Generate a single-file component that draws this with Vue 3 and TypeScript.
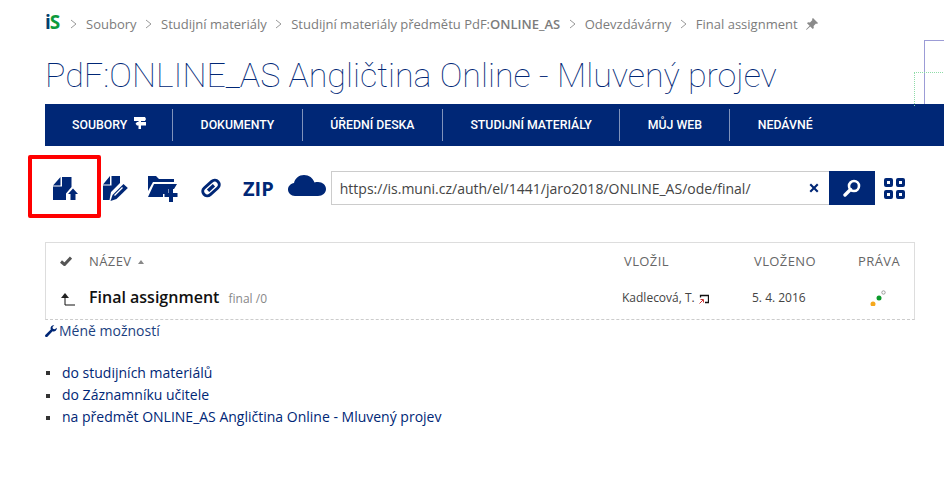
<script setup lang="ts">
const crumbs = ['Soubory', 'Studijní materiály']
const navItems = ['DOKUMENTY', 'ÚŘEDNÍ DESKA', 'STUDIJNÍ MATERIÁLY', 'MŮJ WEB', 'NEDÁVNÉ']
const links = ['do studijních materiálů', 'do Záznamníku učitele', 'na předmět ONLINE_AS Angličtina Online - Mluvený projev']
</script>

<template>
  <div class="page">
    <div class="deco"><div class="deco-dots"></div></div>
    <div class="crumbs">
      <span class="logo"><span class="logo-i">i</span><span class="logo-s">S</span></span>
      <template v-for="c in crumbs" :key="c">
        <svg class="sep" viewBox="0 0 7 10"><path d="M1 1l5 4-5 4" fill="none" stroke="#999" stroke-width="1" /></svg>
        <span>{{ c }}</span>
      </template>
      <svg class="sep" viewBox="0 0 7 10"><path d="M1 1l5 4-5 4" fill="none" stroke="#999" stroke-width="1" /></svg>
      <span>Studijní materiály předmětu PdF:<b>ONLINE_AS</b></span>
      <svg class="sep" viewBox="0 0 7 10"><path d="M1 1l5 4-5 4" fill="none" stroke="#999" stroke-width="1" /></svg>
      <span>Odevzdávárny</span>
      <svg class="sep" viewBox="0 0 7 10"><path d="M1 1l5 4-5 4" fill="none" stroke="#999" stroke-width="1" /></svg>
      <span>Final assignment</span>
      <svg class="pin" viewBox="0 0 12 12"><path d="M7 0l5 5-1 1-1-.4-2.400 2.400.2 2-1 1-2.600-2.600L1 11.600 0 12l.4-1L3.600 7.800 1 5.200l1-1 2 .2L6.400 2 6 1z" fill="#8a8a8a" /></svg>
    </div>

    <h1 class="title">PdF:ONLINE_AS Angličtina Online - Mluvený projev</h1>

    <nav class="nav">
      <a class="nav-item first">SOUBORY
        <svg class="nav-icon" viewBox="0 0 12 12"><path d="M0 0H11L12 2 11 4H7V5H12V8.500H7V12H4.500V8.500H3L1.500 6.700 3 5H4.500V4H0z" fill="#fff" /></svg>
      </a>
      <a v-for="n in navItems" :key="n" class="nav-item">{{ n }}</a>
    </nav>

    <div class="toolbar">
      <div class="redbox"></div>
      <svg class="ic ic-up" viewBox="0 0 25 23"><path d="M0 8.500L7.500 0V8.500zM9 0H18.500V10L13 16.500V23H0V9.500H9zM20 11.500L25 17H22.500V23H17.500V17H15z" fill="#002776" /></svg>
      <svg class="ic ic-ed" viewBox="0 0 25 25"><path d="M0 8.500L7 0V8.500zM8.500 0H17V7L8 16 6.500 24H0V9.500H8.500z" fill="#002776" /><path d="M20.500 8L24.800 12 13.500 23 7.500 25 9.500 19z" fill="#002776" /><path d="M11.500 19.500l8-8" stroke="#fff" stroke-width="1.300" fill="none" /></svg>
      <svg class="ic ic-fo" viewBox="0 0 30 26"><path d="M0 0H8L11 3H26V6H5L0 15zM6 8H29L26 13H20.500V18H15V21H0z" fill="#002776" /><path d="M21 12.500H25V17H29.500V21H25V26H21V21H16.500V17H21z" fill="#002776" /></svg>
      <svg class="ic ic-li" viewBox="0 0 22 22"><g transform="rotate(-42 11 11)" fill="none" stroke="#002776"><rect x="1.500" y="6.500" width="19" height="9" rx="4.500" stroke-width="3" /><path d="M7 11H15" stroke-width="3.400" /></g></svg>
      <span class="zip">ZIP</span>
      <svg class="ic ic-cl" viewBox="0 0 38 21"><path d="M7 21C3 21 0 18 0 14.500 0 11 3 8.500 6 8 7 3.500 11 0 16 0 21 0 25 3 26.500 7.500 27.500 7 29 7 30 7 34.500 7 38 10 38 14 38 18 34.500 21 30 21z" fill="#002776" /></svg>
      <div class="url">
        <span class="url-text">https://is.muni.cz/auth/el/1441/jaro2018/ONLINE_AS/ode/final/</span>
        <svg class="x" viewBox="0 0 10 10"><path d="M2 .5L5 3.500 8 .5 9.500 2 6.500 5 9.500 8 8 9.500 5 6.500 2 9.500 .5 8 3.500 5 .5 2z" fill="#002776" /></svg>
      </div>
      <div class="search">
        <svg viewBox="0 0 18 18"><circle cx="11" cy="7" r="5" fill="none" stroke="#fff" stroke-width="2.600" /><path d="M7.500 10.500L2 16" stroke="#fff" stroke-width="3.400" stroke-linecap="round" /></svg>
      </div>
      <svg class="grid-ic" viewBox="0 0 21 21"><g fill="none" stroke="#002776" stroke-width="3"><rect x="1.500" y="1.500" width="6" height="6" rx=".5" /><rect x="13.500" y="1.500" width="6" height="6" rx=".5" /><rect x="1.500" y="13.500" width="6" height="6" rx=".5" /><rect x="13.500" y="13.500" width="6" height="6" rx=".5" /></g></svg>
    </div>

    <div class="table">
      <div class="row head">
        <svg class="check" viewBox="0 0 12 10"><path d="M1 5.500l3.500 3L11 1.500" fill="none" stroke="#555" stroke-width="3" /></svg>
        <span>NÁZEV <i class="tri"></i></span>
        <span>VLOŽIL</span>
        <span>VLOŽENO</span>
        <span>PRÁVA</span>
      </div>
      <div class="row body">
        <svg class="up" viewBox="0 0 14 14"><path d="M0 6l4-5 4 5z" fill="#222" /><path d="M4 5v8h10" fill="none" stroke="#111" stroke-width="1" /></svg>
        <span class="name"><b>Final assignment</b> <small>final /0</small></span>
        <span class="who">Kadlecová, T.
          <svg class="mail" viewBox="0 0 10 10"><path d="M1.500 3.500V1.500h8v7H6" fill="none" stroke="#111" stroke-width="1.300" /><path d="M.5 9.500l3.500-3.500M1.500 5.500h3v3" fill="none" stroke="#c33" stroke-width="1" /></svg>
        </span>
        <span class="when">5. 4. 2016</span>
        <svg class="rights" viewBox="0 0 18 16"><circle cx="3" cy="14" r="2.500" fill="#f5a81c" /><circle cx="9" cy="8" r="2.500" fill="#0a9a2a" /><circle cx="13.500" cy="2.500" r="1.700" fill="none" stroke="#888" stroke-width=".8" /></svg>
      </div>
    </div>

    <a class="more">
      <svg viewBox="0 0 12 12"><path d="M11.800 2.800A3.200 3.200 0 0 1 7.600 6.300L2.400 11.700a1.200 1.200 0 0 1-1.900-1.900l5.300-5.300A3.200 3.200 0 0 1 9.300.2L7.500 2l.4 1.800 1.900.5z" fill="#002776" /></svg>Méně možností
    </a>

    <ul class="links">
      <li v-for="l in links" :key="l">{{ l }}</li>
    </ul>
  </div>
</template>

<style>
html, body { margin: 0; background: #fff; overflow: hidden; }
</style>

<style scoped>
.page { position: relative; width: 944px; height: 500px; overflow: hidden; padding-left: 45px; box-sizing: border-box; font-family: "Open Sans", sans-serif; color: #002776; }
.deco { position: absolute; left: 924px; top: 40px; width: 20px; height: 64px; box-sizing: border-box; border-left: 1px solid #9c9cd6; border-top: 1px solid #9c9cd6; }
.deco-dots { position: absolute; left: -11px; top: 31px; width: 40px; height: 33px; border-left: 1px dotted #8fdca8; border-top: 1px dotted #8fdca8; }
.crumbs { display: flex; align-items: center; height: 48px; font-size: 13px; color: #7c7c7c; white-space: nowrap; }
.crumbs b { font-weight: 600; }
.logo { width: 15px; margin-right: 10px; margin-left: 0; font-size: 19px; font-weight: 700; line-height: 1; letter-spacing: -1px; margin-top: -4px; }
.logo-i { color: #00406e; }
.logo-s { color: #0d9a3c; }
.sep { width: 7px; height: 10px; margin: 0 8.750px; }
.logo + .sep { margin-left: 0; margin-right: 9px; }
.pin { width: 12px; height: 12px; margin-left: 8px; }
.title { margin: 0; height: 56px; font: 100 34px/54px Roboto, sans-serif; color: #002776; white-space: nowrap; }
.nav { display: flex; align-items: center; height: 42px; background: #002776; width: 899px; }
.nav-item { display: flex; align-items: center; height: 32px; padding: 0 27.450px; border-right: 1px solid rgba(255, 255, 255, .5); font: 500 12.300px Roboto, sans-serif; color: #fff; white-space: nowrap; }
.nav-item:last-child { border-right: 0; }
.nav-item.first { padding-left: 27px; padding-right: 26px; }
.nav-icon { width: 12px; height: 12px; margin: -4px 0 0 7px; }
.toolbar { position: relative; display: flex; align-items: center; height: 34px; margin-top: 25px; }
.redbox { position: absolute; left: -17px; top: -16px; width: 73px; height: 63px; box-sizing: border-box; border: 4px solid #f00; border-radius: 2px; }
.ic { flex: none; }
.ic-up { width: 25px; height: 23px; margin-left: 8px; }
.ic-ed { width: 25px; height: 25px; margin-left: 25px; }
.ic-fo { width: 30px; height: 26px; margin: 1px 0 0 20px; }
.ic-li { width: 22px; height: 22px; margin-left: 22px; margin-top: -1px; }
.zip { margin-left: 21px; font-size: 20px; font-weight: 700; }
.ic-cl { width: 38px; height: 21px; margin: -5px 0 0 14px; }
.url { display: flex; align-items: center; justify-content: space-between; box-sizing: border-box; width: 498px; height: 34px; margin-left: 5px; padding: 0 10px 0 8px; border: 1px solid #ccc; border-right: 0; font-size: 14px; color: #444; }
.x { width: 10px; height: 10px; }
.search { display: flex; align-items: center; justify-content: center; width: 46px; height: 34px; background: #002776; }
.search svg { width: 18px; height: 18px; }
.grid-ic { width: 21px; height: 21px; margin-left: 9px; }
.table { box-sizing: border-box; width: 870px; height: 78px; margin-top: 37px; border: 1px solid #ddd; border-bottom: 1px dashed #ccc; }
.row { display: grid; grid-template-columns: 43px 535px 130px 104px 1fr; align-items: center; }
.head { height: 36px; font-size: 13px; color: #666; padding-top: 0; }
.head > span { letter-spacing: .4px; }
.check { width: 12px; height: 10px; margin-left: 14px; }
.tri { display: inline-block; margin: 0 0 2px 3px; border: 3px solid transparent; border-bottom: 4px solid #888; border-top: 0; }
.body { height: 36px; margin-top: 0; font-size: 12px; color: #444; }
.up { width: 14px; height: 14px; margin: 4px 0 0 15px; }
.name b { font-size: 16px; font-weight: 600; color: #111; }
.name small { margin-left: 6px; font-size: 12px; color: #888; }
.who, .when { margin-left: -2px; }
.mail { width: 10px; height: 10px; margin: 0 0 -2px 1px; }
.rights { width: 18px; height: 16px; margin: 2px 0 0 12px; }
.more { display: flex; align-items: center; height: 21px; font-size: 14px; color: #1b3f80; }
.more svg { width: 12px; height: 12px; margin-right: 2px; }
.links { list-style: none; margin: 20.400px 0 0; padding: 0; font-size: 14px; line-height: 22.500px; }
.links li { position: relative; padding-left: 17px; }
.links li:first-child { padding-top: 1px; margin-bottom: -1px; }
.links li::before { content: ""; position: absolute; left: 1px; top: 10px; width: 4px; height: 4px; background: #333; }
</style>
